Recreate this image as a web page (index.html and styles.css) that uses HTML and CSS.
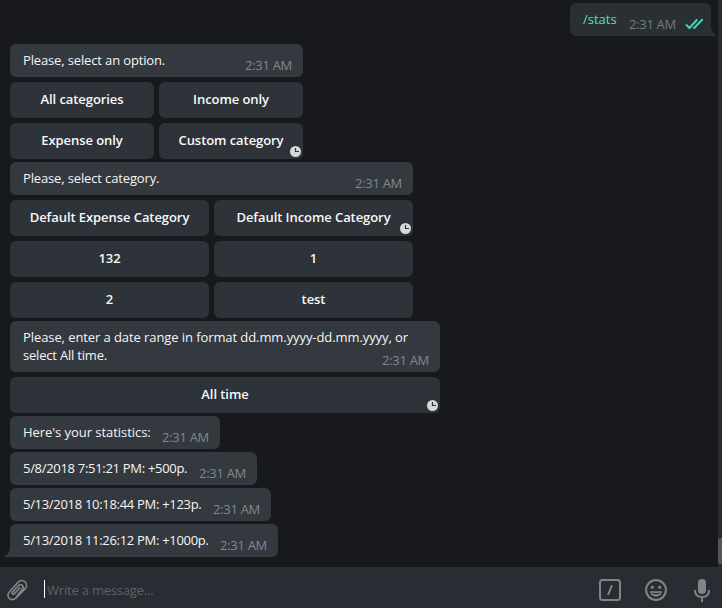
FILE: index.html
```html
<!DOCTYPE html>
<html lang="en">
<head>
<meta charset="utf-8">
<title>Chat</title>
<link rel="stylesheet" href="styles.css">
</head>
<body>
<main class="chat">
  <div class="bubble out"><p><span class="command">/stats</span></p><time>2:31 AM</time>
    <svg class="checks" width="19" height="12" viewBox="0 0 19 12"><path d="M1 6.5 4.5 10 12.2 1.5M8.2 9.3 9.2 10 17.7 1.3"/></svg>
    <svg class="tail" width="6" height="9" viewBox="0 0 6 9"><path d="M0 0Q1 6 6 9H0Z"/></svg>
  </div>

  <section class="group options">
    <div class="bubble"><p>Please, select an option.</p><time>2:31 AM</time></div>
    <div class="keys two">
      <button>All categories</button><button>Income only</button>
      <button>Expense only</button><button>Custom category<svg class="clock" viewBox="0 0 11 11"><circle cx="5.5" cy="5.5" r="5.5"/><path d="M5.5 2V5.5H9"/></svg></button>
    </div>
  </section>

  <section class="group categories">
    <div class="bubble"><p>Please, select category.</p><time>2:31 AM</time></div>
    <div class="keys two">
      <button>Default Expense Category</button><button>Default Income Category<svg class="clock" viewBox="0 0 11 11"><circle cx="5.5" cy="5.5" r="5.5"/><path d="M5.5 2V5.5H9"/></svg></button>
      <button>132</button><button>1</button>
      <button>2</button><button>test</button>
    </div>
  </section>

  <section class="group range">
    <div class="bubble tall"><p>Please, enter a date range in format dd.mm.yyyy-dd.mm.yyyy, or<br><span class="last-line">select All time.</span></p><time>2:31 AM</time></div>
    <div class="keys">
      <button>All time<svg class="clock" viewBox="0 0 11 11"><circle cx="5.5" cy="5.5" r="5.5"/><path d="M5.5 2V5.5H9"/></svg></button>
    </div>
  </section>

  <div class="bubble w-title"><p>Here's your statistics:</p><time>2:31 AM</time></div>
  <div class="bubble entry w-first"><p>5/8/2018 7:51:21 PM: +500p.</p><time>2:31 AM</time></div>
  <div class="bubble entry w-second"><p>5/13/2018 10:18:44 PM: +123p.</p><time>2:31 AM</time></div>
  <div class="bubble entry w-third"><p>5/13/2018 11:26:12 PM: +1000p.</p><time>2:31 AM</time>
    <svg class="tail" width="6" height="9" viewBox="0 0 6 9"><path d="M6 0Q5 6 0 9H6Z"/></svg>
  </div>
  <div class="scroll"><i></i></div>
</main>

<footer class="composer">
  <svg class="clip" width="22" height="24" viewBox="0 0 22 24"><path d="M14.3 9.4 8.2 15.8a1.2 1.2 0 0 1-1.8-1.7L12.6 7.5a2.5 2.5 0 0 1 3.7 3.6L9.6 20.2a4.4 4.4 0 0 1-6.4-6.2L12.2 4.1a4.7 4.7 0 0 1 7 6.5L10.2 20"/></svg>
  <span class="caret"></span>
  <span class="placeholder">Write a message...</span>
  <svg class="slash" width="22" height="22" viewBox="0 0 22 22"><rect x="1" y="1" width="20" height="20" rx="2.5"/><path d="M13 6.2 9 15.8"/></svg>
  <svg class="smile" width="22" height="22" viewBox="0 0 22 22"><circle class="ring" cx="11" cy="11" r="9.9"/><circle cx="7.3" cy="8.2" r="1.6"/><circle cx="14.7" cy="8.2" r="1.6"/><path d="M4.8 12.2H17.2Q15.8 17.6 11 17.6T4.8 12.2Z"/><path class="lip" d="M7 14Q11 15.3 15 14"/></svg>
  <svg class="mic" width="16" height="23" viewBox="0 0 16 23"><rect x="4" y="0" width="8" height="15" rx="4"/><path d="M1 11Q1 18 8 18T15 11M8 18V23"/></svg>
</footer>
</body>
</html>
```
FILE: styles.css
```css
* { box-sizing: border-box; }
body {
  margin: 0;
  width: 722px;
  height: 608px;
  display: flex;
  flex-direction: column;
  overflow: hidden;
  background: #18191d;
  color: #f5f5f5;
  font: 13px/18px "Open Sans", "Noto Sans", sans-serif;
}
.chat {
  position: relative;
  height: 567px;
  padding: 3px 11px 0 10px;
  display: flex;
  flex-direction: column;
  align-items: flex-start;
  gap: 3px;
}
.bubble {
  position: relative;
  height: 33px;
  padding: 7px 11px 0 13px;
  display: flex;
  justify-content: space-between;
  border-radius: 6px;
  background: #33393f;
  white-space: nowrap;
}
.bubble p { margin: 0; letter-spacing: -0.14px; }
.bubble time {
  align-self: flex-end;
  margin-bottom: 3px;
  color: #82888c;
  letter-spacing: -0.3px;
}
.tall { height: 51px; }
.tall time { margin-left: -60px; }
.tall p { letter-spacing: -0.085px; }
.w-title p { letter-spacing: -0.05px; }
.tall .last-line { letter-spacing: -0.2px; }
.entry p { letter-spacing: -0.3px; }
.out {
  align-self: flex-end;
  width: 141px;
  margin-bottom: 5px;
  padding-right: 7px;
  justify-content: flex-start;
  background: #2a2f33;
}
.out p { width: 46px; letter-spacing: 0; }
.out time { color: #737b80; }
.command { color: #4be1c3; }
.checks { margin: 8px 0 0 auto; }
.checks path { fill: none; stroke: #41d4b6; stroke-width: 2; }
.tail { position: absolute; left: -6px; bottom: 0; }
.tail path { fill: #33393f; }
.w-third { border-bottom-left-radius: 0; }
.out { border-bottom-right-radius: 0; }
.out .tail { left: auto; right: -6px; }
.out .tail path { fill: #2a2f33; }
.group { display: flex; flex-direction: column; gap: 5px; }
.options { width: 293px; }
.categories { width: 403px; }
.range { width: 430px; }
.w-title { width: 210px; }
.w-first { width: 247px; }
.w-second { width: 261px; }
.w-third { width: 268px; }
.keys { display: grid; gap: 5px; }
.two { grid-template-columns: 1fr 1fr; }
.keys button {
  position: relative;
  height: 36px;
  padding: 0 0 2px;
  border: 0;
  border-radius: 6px;
  background: #2e3339;
  color: #f7f8f8;
  font: 600 13px/18px "Open Sans", "Noto Sans", sans-serif;
  letter-spacing: -0.07px;
}
.clock { position: absolute; right: 2px; bottom: 2px; width: 11px; height: 11px; }
.clock circle { fill: #d6d7d9; }
.clock path { fill: none; stroke: #2e3339; stroke-width: 1.2; }
.scroll {
  position: absolute;
  right: 0;
  top: 0;
  width: 4px;
  height: 567px;
  padding-top: 538px;
  background: #292a2d;
}
.scroll i { display: block; height: 26px; border-radius: 2px 0 0 2px; background: #535456; }
.composer {
  height: 41px;
  padding: 0 12px 0 6px;
  display: flex;
  align-items: flex-start;
  background: #282d33;
}
.composer svg { flex: none; fill: none; stroke: #828384; stroke-width: 2; }
.composer .clip { margin-top: 11px; stroke-width: 1.7; }
.caret { width: 1px; height: 18px; margin: 13px 2px 0 16px; background: #fff; }
.placeholder { margin-top: 14px; flex: 1; color: #5d6165; letter-spacing: -0.2px; }
.composer .slash { margin: 12px 24px 0 0; }
.composer .smile { margin: 12px 27px 0 0; fill: #828384; stroke: none; }
.smile .ring { fill: none; stroke: #828384; stroke-width: 2; }
.smile .lip { fill: none; stroke: #282d33; stroke-width: 1.2; }
.composer .mic { margin-top: 12px; }
.mic rect { fill: #828384; stroke: none; }
```
